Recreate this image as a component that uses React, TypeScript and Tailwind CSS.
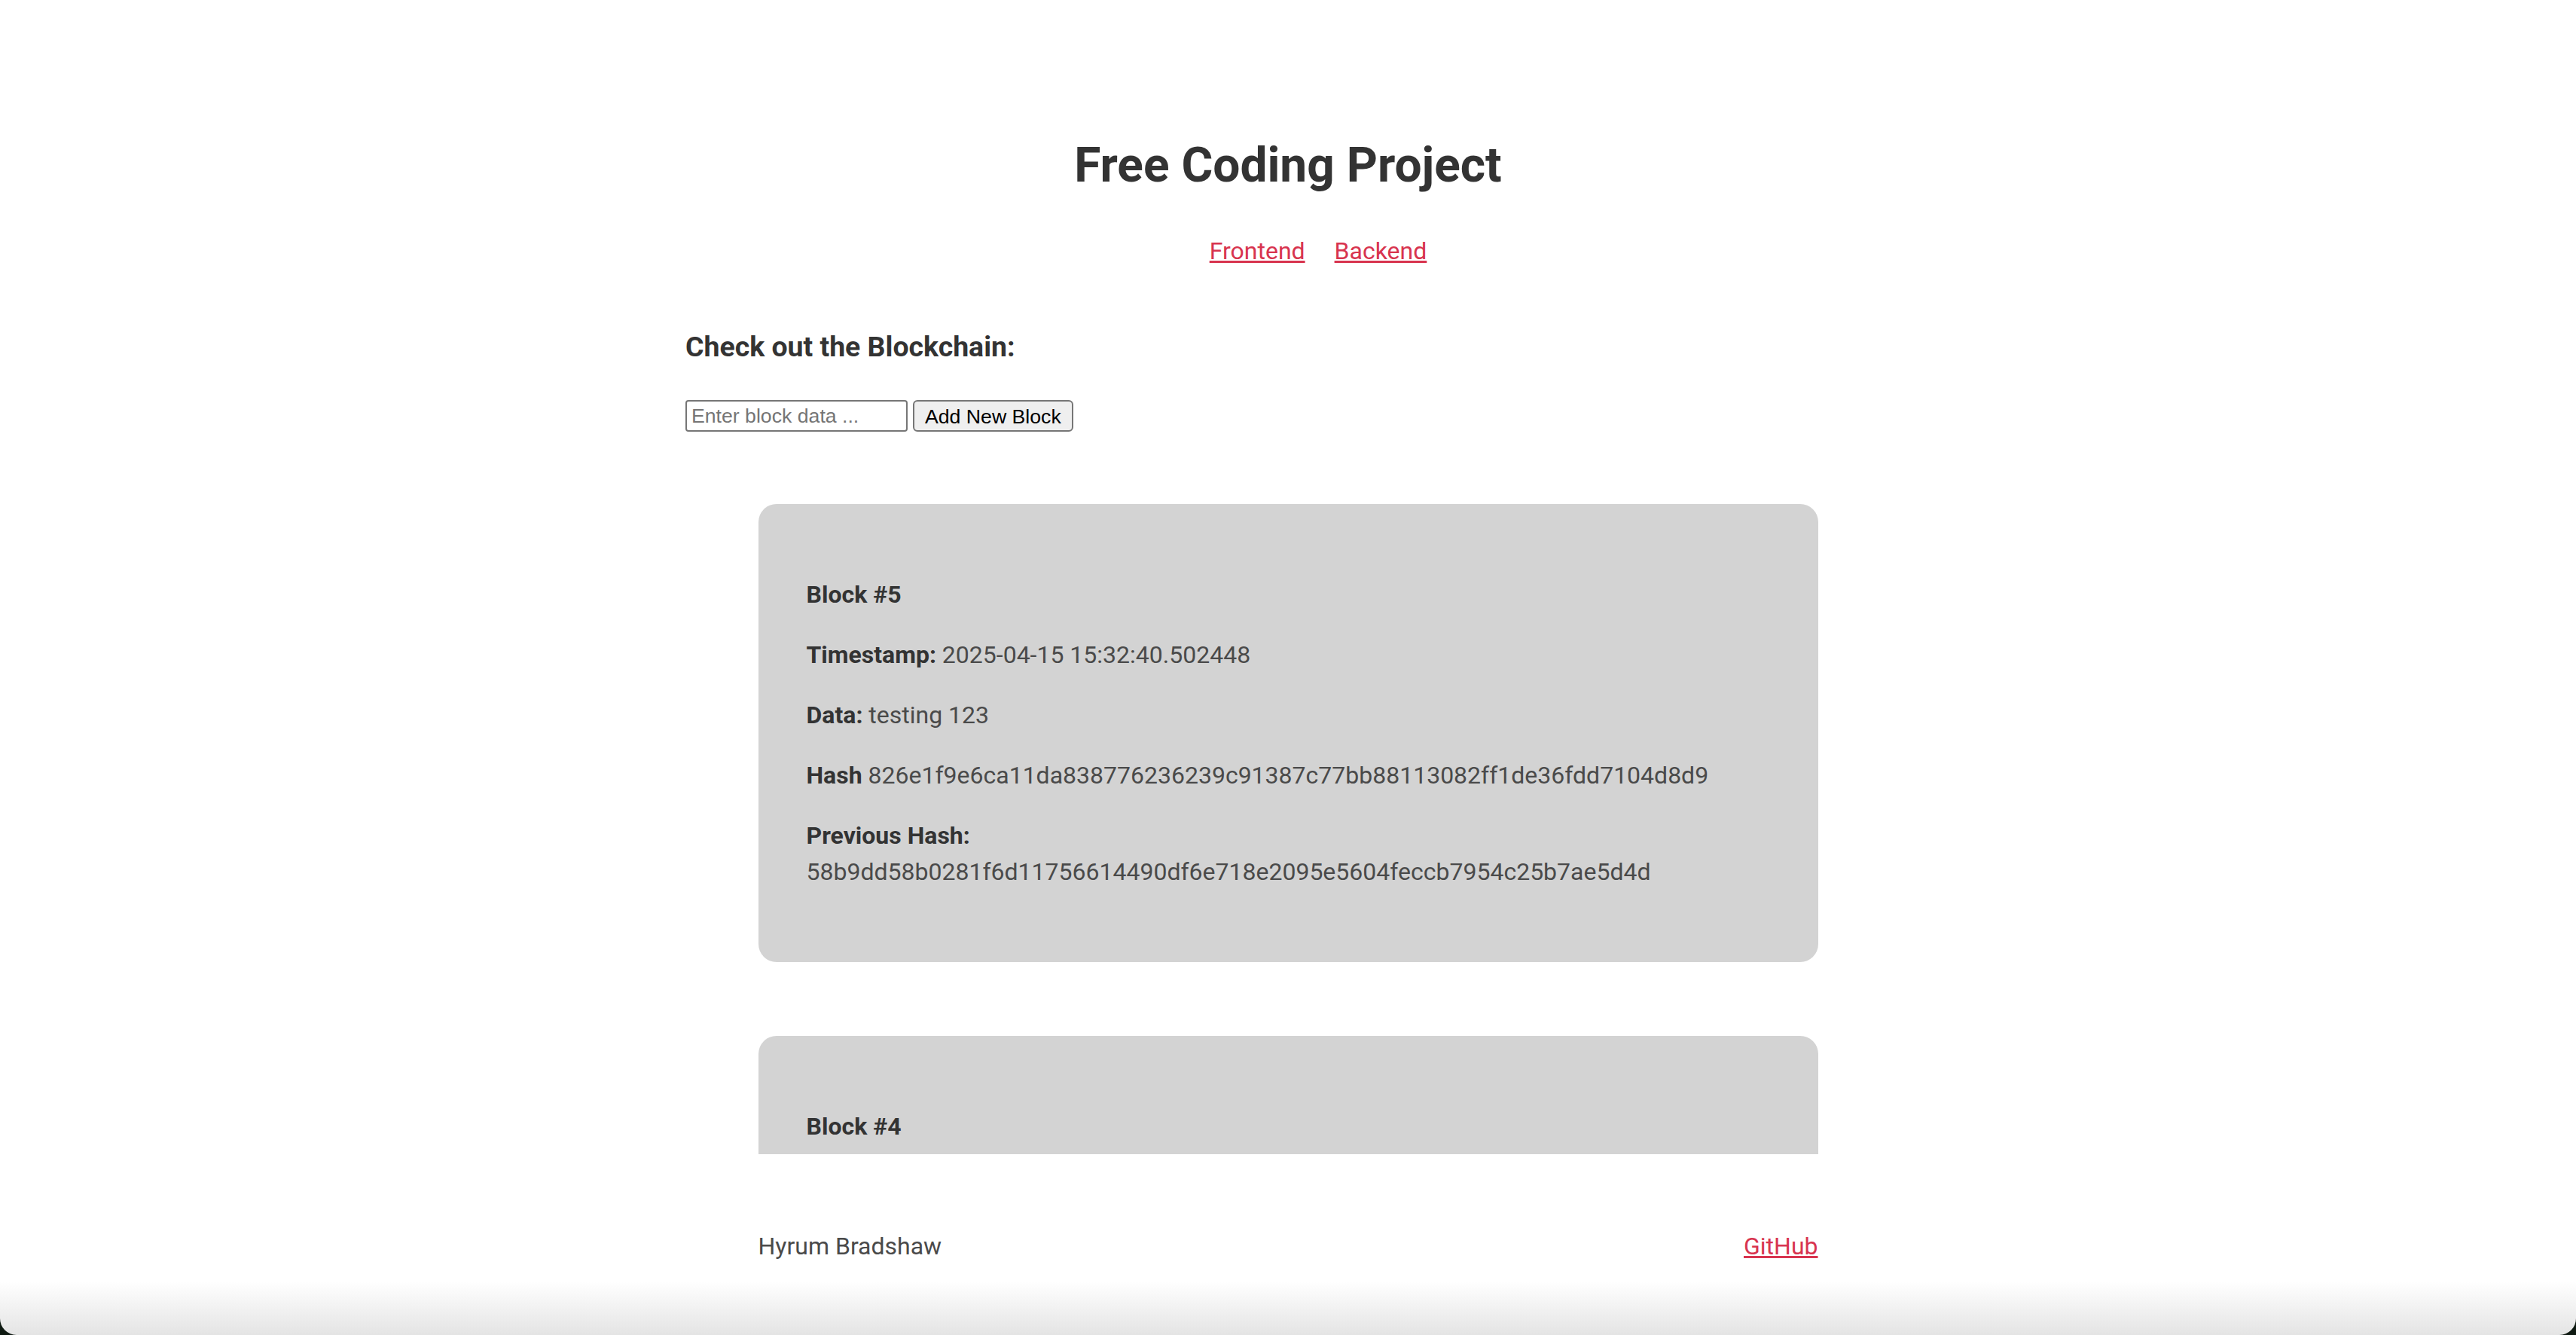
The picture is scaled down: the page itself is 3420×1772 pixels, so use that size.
import { useState } from 'react';

interface Block {
  index: number;
  timestamp: string;
  data: string;
  hash: string;
  previousHash: string;
}

const BLOCKS: Block[] = [
  {
    index: 5,
    timestamp: '2025-04-15 15:32:40.502448',
    data: 'testing 123',
    hash: '826e1f9e6ca11da838776236239c91387c77bb88113082ff1de36fdd7104d8d9',
    previousHash: '58b9dd58b0281f6d11756614490df6e718e2095e5604feccb7954c25b7ae5d4d',
  },
  {
    index: 4,
    timestamp: '2025-04-15 15:30:12.118304',
    data: 'hello world',
    hash: '58b9dd58b0281f6d11756614490df6e718e2095e5604feccb7954c25b7ae5d4d',
    previousHash: '0c4f2a7e91b3d5f68a2c0e4b7d9f1a3c5e7b9d1f3a5c7e9b1d3f5a7c9e1b3d5f',
  },
];

function BlockCard({ block }: { block: Block }) {
  return (
    <div className="mx-auto flex w-[1407px] flex-col gap-[32px] rounded-[24px] bg-[#d3d3d3] px-[64px] py-[96px] text-[32px] leading-[48px] text-[#4a4a4a]">
      <p className="font-bold text-[#333]">Block #{block.index}</p>
      <p>
        <span className="font-bold text-[#333]">Timestamp:</span> {block.timestamp}
      </p>
      <p>
        <span className="font-bold text-[#333]">Data:</span> {block.data}
      </p>
      <p>
        <span className="font-bold text-[#333]">Hash</span> {block.hash}
      </p>
      <p>
        <span className="font-bold text-[#333]">Previous Hash:</span>
        <br />
        {block.previousHash}
      </p>
    </div>
  );
}

export default function App() {
  const [value, setValue] = useState('');

  return (
    <div className="h-screen bg-[#0f1a12] font-['Roboto',sans-serif]">
      <div className="flex h-full flex-col overflow-hidden rounded-b-[22px] bg-[linear-gradient(to_bottom,#ffffff_96%,#e4e4e4_100%)]">
        {/* Header */}
        <header className="pt-[172px]">
          <h1 className="text-center text-[64px] leading-[96px] font-bold text-[#333]">Free Coding Project</h1>
          <nav className="mt-[41px] flex justify-center gap-[39px] pl-[80px] text-[32px] leading-[48px]">
            <a href="#" className="text-[#d8344f] underline">Frontend</a>
            <a href="#" className="text-[#d8344f] underline">Backend</a>
          </nav>
          <div className="mx-auto mt-[75px] w-[1600px]">
            <h3 className="text-[37.44px] leading-[56px] font-bold text-[#333]">Check out the Blockchain:</h3>
            <div className="mt-[43px] flex gap-[7px] font-['Liberation_Sans',Arial,sans-serif] text-[26.67px]">
              <input
                value={value}
                onChange={(e) => setValue(e.target.value)}
                placeholder="Enter block data ..."
                className="h-[42px] w-[295px] rounded-[4px] border-2 border-[#767676] bg-white px-[6px] text-black placeholder:text-[#757575] outline-none"
              />
              <button className="h-[42px] rounded-[6px] border-2 border-[#767676] bg-[#efefef] px-[14px] text-black">
                Add New Block
              </button>
            </div>
          </div>
        </header>

        {/* Chain */}
        <main className="min-h-0 flex-1 overflow-hidden">
          <div className="flex flex-col gap-[98px] pt-[96px]">
            {BLOCKS.map((b) => (
              <BlockCard key={b.index} block={b} />
            ))}
          </div>
        </main>

        {/* Footer */}
        <footer className="mx-auto flex w-[1407px] justify-between pt-[98px] pb-[94px] text-[32px] leading-[48px] text-[#4a4a4a]">
          <span>Hyrum Bradshaw</span>
          <a href="#" className="text-[#d8344f] underline">GitHub</a>
        </footer>
      </div>
    </div>
  );
}
